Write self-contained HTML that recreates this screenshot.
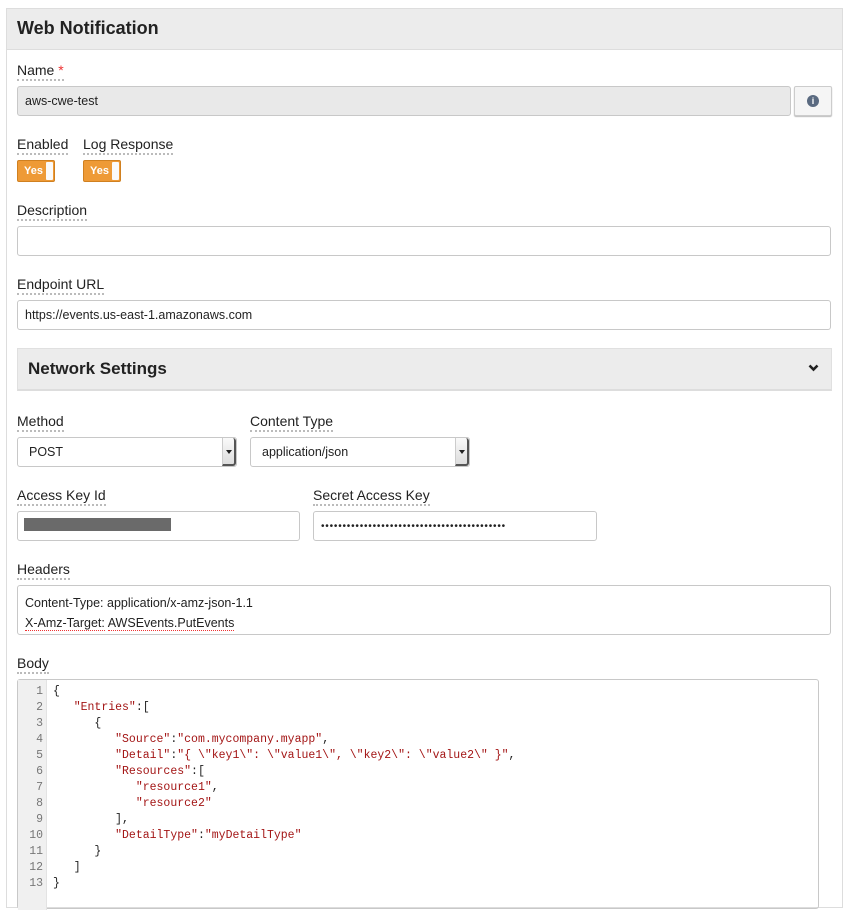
<!DOCTYPE html>
<html><head><meta charset="utf-8"><style>
*{box-sizing:border-box;margin:0;padding:0}
body{width:849px;height:902px;background:#fff;font-family:"Liberation Sans",sans-serif;color:#222;position:relative;overflow:hidden}
.a{position:absolute}
.panel{left:6px;top:8px;width:837px;height:900px;border:1px solid #ddd;border-right:1px solid #ddd}
.hdr{left:7px;top:9px;width:835px;height:41px;background:#ececec;border-bottom:1px solid #ddd}
.t{font-weight:bold;font-size:18px;color:#222}
.lbl{font-size:14px;color:#222;border-bottom:2px dotted #bbb;line-height:16px;padding-bottom:1px}
.inp{border:1px solid #c8c8c8;border-radius:3px;background:#fff;font-size:12.5px;padding-left:7px;display:flex;align-items:center}
.tog{width:38px;height:22px;background:#ee9a36;border:1px solid #d08020;border-radius:2px;color:#fff;font-weight:bold;font-size:11px}
.tog span{position:absolute;left:6px;top:4px}
.tog i{position:absolute;right:1px;top:1px;width:7px;height:18px;background:#fafafa;border-radius:1px}
.sel i{position:absolute;right:0;top:0;width:14px;height:28px;background:linear-gradient(#fafafa,#ddd);border-left:1px solid #ccc;border-right:2px solid #555;border-bottom:2px solid #555;border-radius:0 3px 3px 0}
.sel i:after{content:"";position:absolute;left:3px;top:12px;border:3px solid transparent;border-top:4px solid #222}
pre{font-family:"Liberation Mono",monospace;font-size:11.5px;line-height:16px}
.s{color:#a31515}
</style></head><body>
<div class="a panel"></div>
<div class="a hdr"></div>
<div class="a t" style="left:17px;top:18px">Web Notification</div>

<div class="a lbl" style="left:17px;top:62px">Name <span style="color:#e33">*</span></div>
<div class="a inp" style="left:17px;top:86px;width:774px;height:30px;background:#e9e9e9">aws-cwe-test</div>
<div class="a" style="left:794px;top:86px;width:38px;height:30px;border:1px solid #ccc;border-radius:2px;background:#f5f5f5;box-shadow:0 1px 1px #bbb"><div class="a" style="left:12px;top:8px;width:12px;height:12px;border-radius:50%;background:#5a6a80;color:#fff;font-size:9px;font-weight:bold;text-align:center;line-height:12px">i</div></div>

<div class="a lbl" style="left:17px;top:136px">Enabled</div>
<div class="a lbl" style="left:83px;top:136px">Log Response</div>
<div class="a tog" style="left:17px;top:160px"><span>Yes</span><i></i></div>
<div class="a tog" style="left:83px;top:160px"><span>Yes</span><i></i></div>

<div class="a lbl" style="left:17px;top:202px">Description</div>
<div class="a inp" style="left:17px;top:226px;width:814px;height:30px"></div>
<div class="a lbl" style="left:17px;top:276px">Endpoint URL</div>
<div class="a inp" style="left:17px;top:300px;width:814px;height:30px">https://events.us-east-1.amazonaws.com</div>

<div class="a" style="left:17px;top:348px;width:815px;height:43px;background:#ececec;border:1px solid #e0e0e0;border-bottom:2px solid #ddd"></div>
<div class="a" style="left:28px;top:359px;font-weight:bold;font-size:17px">Network Settings</div>
<svg class="a" style="left:808px;top:364px" width="11" height="8" viewBox="0 0 11 8"><path d="M1.5 1.5 L5.5 5.5 L9.5 1.5" stroke="#222" stroke-width="2.6" fill="none"/></svg>

<div class="a lbl" style="left:17px;top:413px">Method</div>
<div class="a lbl" style="left:250px;top:413px">Content Type</div>
<div class="a inp sel" style="left:17px;top:437px;width:220px;height:30px;padding-left:11px">POST<i></i></div>
<div class="a inp sel" style="left:250px;top:437px;width:220px;height:30px;padding-left:11px">application/json<i></i></div>

<div class="a lbl" style="left:17px;top:487px">Access Key Id</div>
<div class="a lbl" style="left:313px;top:487px">Secret Access Key</div>
<div class="a inp" style="left:17px;top:511px;width:283px;height:30px"></div>
<div class="a" style="left:24px;top:518px;width:147px;height:13px;background:#6a6a6a"></div>
<div class="a inp" style="left:313px;top:511px;width:284px;height:30px;font-size:10px;letter-spacing:0.8px">•••••••••••••••••••••••••••••••••••••••••••</div>

<div class="a lbl" style="left:17px;top:561px">Headers</div>
<div class="a inp" style="left:17px;top:585px;width:814px;height:50px;display:block;padding-top:7px;line-height:20px;font-size:12.5px">Content-Type: application/x-amz-json-1.1<br><span style="border-bottom:1px dotted #e33">X-Amz-Target:</span> <span style="border-bottom:1px dotted #e33">AWSEvents.PutEvents</span></div>

<div class="a lbl" style="left:17px;top:655px">Body</div>
<div class="a" style="left:17px;top:679px;width:802px;height:230px;border:1px solid #c8c8c8;border-radius:3px"></div>
<div class="a" style="left:18px;top:680px;width:29px;height:230px;background:#f0f0f0;border-right:1px solid #e3e3e3"></div>
<pre class="a" style="left:18px;top:684px;width:25px;text-align:right;color:#777">1
2
3
4
5
6
7
8
9
10
11
12
13</pre>
<pre class="a" style="left:53px;top:684px;color:#222">{
   <span class="s">"Entries"</span>:[
      {
         <span class="s">"Source"</span>:<span class="s">"com.mycompany.myapp"</span>,
         <span class="s">"Detail"</span>:<span class="s">"{ \"key1\": \"value1\", \"key2\": \"value2\" }"</span>,
         <span class="s">"Resources"</span>:[
            <span class="s">"resource1"</span>,
            <span class="s">"resource2"</span>
         ],
         <span class="s">"DetailType"</span>:<span class="s">"myDetailType"</span>
      }
   ]
}</pre>
</body></html>
